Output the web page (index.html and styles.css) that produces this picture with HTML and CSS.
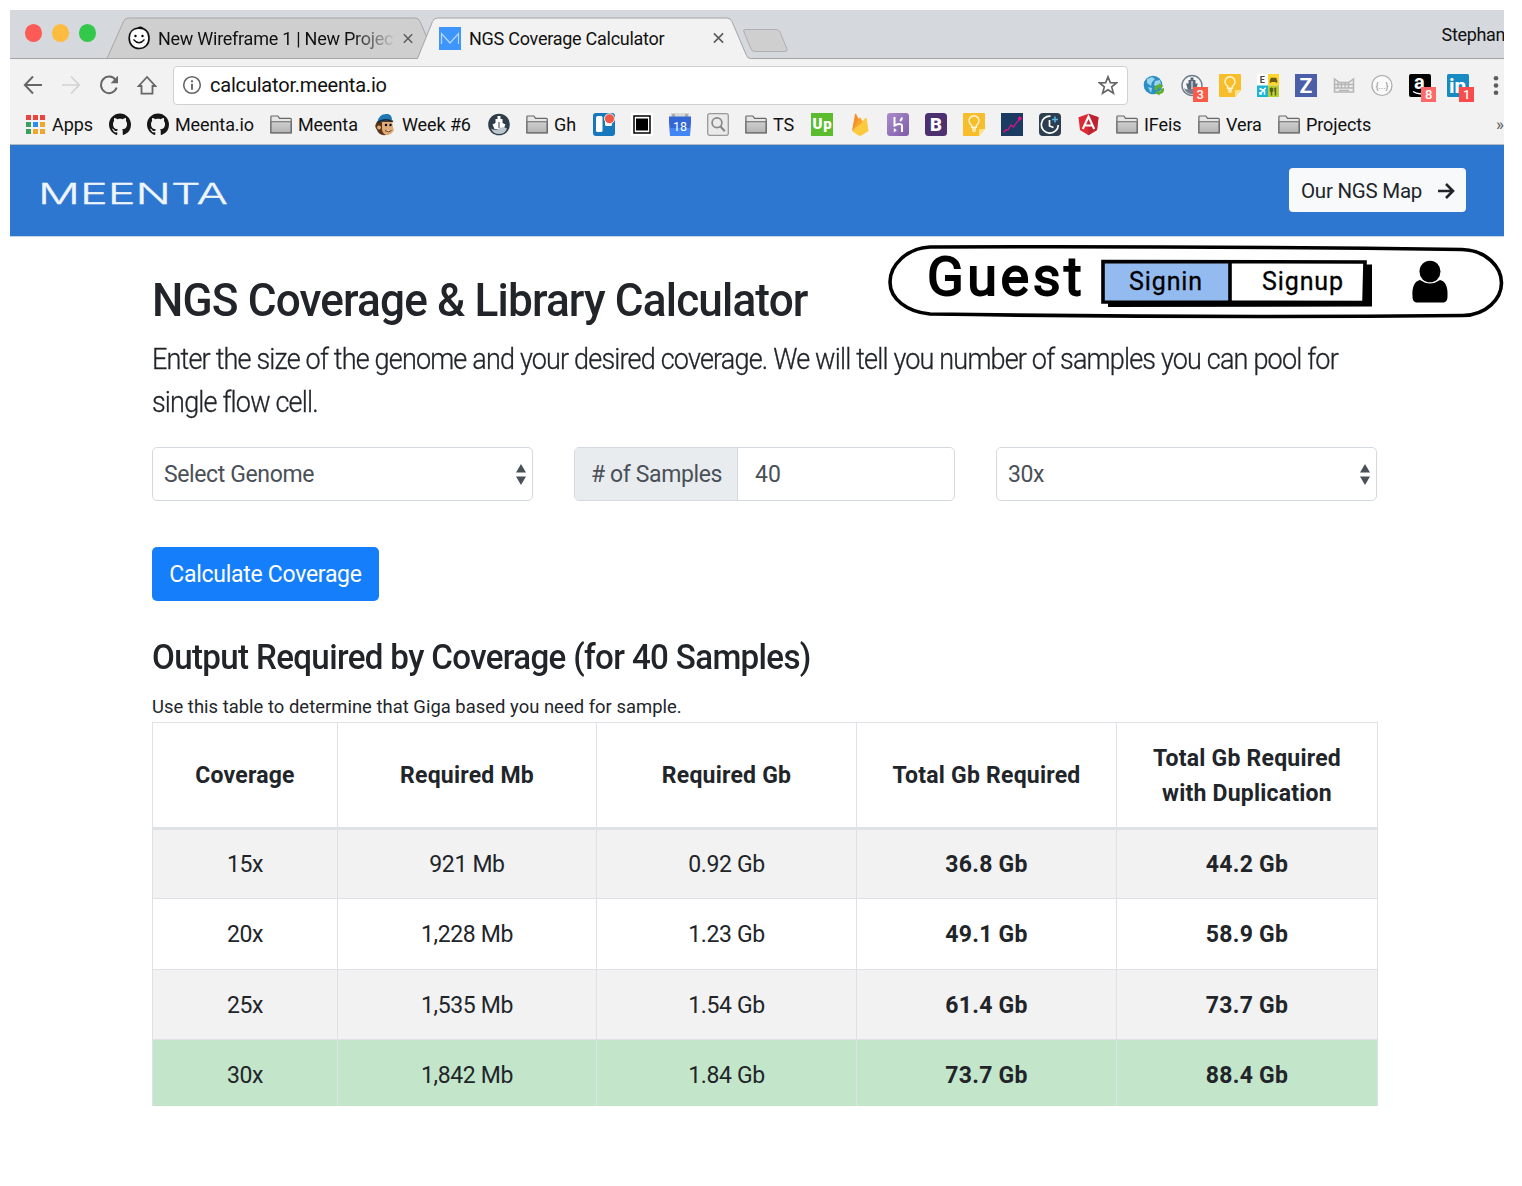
FILE: index.html
```html
<!DOCTYPE html>
<html lang="en">
<head>
<meta charset="utf-8">
<title>NGS Coverage Calculator</title>
<link rel="stylesheet" href="styles.css">
</head>
<body>
<svg class="defs" width="0" height="0">
  <defs>
    <linearGradient id="folderFill" x1="0" y1="0" x2="0" y2="1"><stop offset="0" stop-color="#cfcfcf"/><stop offset="1" stop-color="#b4b4b4"/></linearGradient>
    <linearGradient id="herokuFill" x1="0" y1="0" x2="1" y2="1"><stop offset="0" stop-color="#a88bcb"/><stop offset="1" stop-color="#7f5da8"/></linearGradient>
    <symbol id="folder" viewBox="0 0 22 22"><path d="M.9 19.3V3.3q0-.8.8-.8h6.2l1.6 2.3h10.9q.9 0 .9.9v13.6z" fill="#e6e6e6" stroke="#686868" stroke-width="1.2"/><path d="M1 8.2h20v11H1z" fill="url(#folderFill)" stroke="#686868" stroke-width="1.1"/></symbol>
    <symbol id="github" viewBox="0 0 16 16"><path fill="#161616" d="M8 0C3.58 0 0 3.58 0 8c0 3.54 2.29 6.53 5.47 7.59.4.07.55-.17.55-.38 0-.19-.01-.82-.01-1.49-2.01.37-2.53-.49-2.69-.94-.09-.23-.48-.94-.82-1.13-.28-.15-.68-.52-.01-.53.63-.01 1.08.58 1.23.82.72 1.21 1.87.87 2.33.66.07-.52.28-.87.51-1.07-1.78-.2-3.64-.89-3.64-3.95 0-.87.31-1.59.82-2.15-.08-.2-.36-1.02.08-2.12 0 0 .67-.21 2.2.82.64-.18 1.32-.27 2-.27s1.36.09 2 .27c1.53-1.04 2.2-.82 2.2-.82.44 1.1.16 1.92.08 2.12.51.56.82 1.27.82 2.15 0 3.07-1.87 3.75-3.65 3.95.29.25.54.73.54 1.48 0 1.07-.01 1.93-.01 2.2 0 .21.15.46.55.38A8.01 8.01 0 0 0 16 8c0-4.42-3.58-8-8-8z"/></symbol>
    <symbol id="keep" viewBox="0 0 22 23"><path d="M1 0h20a1 1 0 0 1 1 1v15l-6 7H1a1 1 0 0 1-1-1V1a1 1 0 0 1 1-1z" fill="#f7bd2b"/><path d="M22 16l-6 7v-6a1 1 0 0 1 1-1z" fill="#fde18c"/><path d="M8.600 14.200v-2.100a5 5 0 1 1 4.800 0v2.100z M9 16h4M9.400 18h3.200" fill="none" stroke="#fff6d5" stroke-width="1.400"/></symbol>
    <symbol id="close" viewBox="0 0 10 10"><path d="M.8.8l8.400 8.400M9.200.8L.8 9.200" stroke="#5c5c5c" stroke-width="1.500"/></symbol>
  </defs>
</svg>

<div class="window">
  <div class="tabstrip">
    <svg class="tab-shapes" width="1494" height="49" viewBox="10 10 1494 49">
      <path d="M107 58.500l16.500-37q1.500-3.500 5-3.500H415q3.500 0 5 3.500L428 40l-8 18.500z" fill="#cfcfcf" stroke="#a6a6a8"/>
      <path d="M10 58.500H417.500L432.500 21.500q1.500-3.500 5-3.500H727q3.500 0 5 3.500l14.500 34q1 3 4 3V60H10z" fill="#f2f2f2"/>
      <path d="M10 58.500H417.500L432.500 21.500q1.500-3.500 5-3.500H727q3.500 0 5 3.500l14.500 34q1 3 4 3H1504" fill="none" stroke="#a2a4a7"/>
      <path d="M745 29.500h31q3 0 4 2.500l7 17q.7 2.500-2 2.500h-30q-3 0-4-2.500l-7-17q-1-2.500 1-2.500z" fill="#cfcfcf" stroke="#adafb2"/>
    </svg>
    <div class="lights"><i class="red"></i><i class="amber"></i><i class="green"></i></div>
    <div class="tab tab-first">
      <svg width="22" height="24" viewBox="0 0 22 24"><path d="M10 2.200C5 2.500 1.200 6 1.200 12c0 6.500 4 10.500 9.800 10.500s10-4 10-10C21 6 17.500 1.800 10 2.200zM10 2.200q2-1.500 5 0" fill="#fff" stroke="#111" stroke-width="1.700"/><circle cx="7.500" cy="10" r="1.200"/><circle cx="14.500" cy="10" r="1.200"/><path d="M5.500 13.500q5.500 6.500 11 0" fill="none" stroke="#111" stroke-width="1.300"/></svg>
      <span class="tab-title fade">New Wireframe 1 | New Project</span>
      <svg class="x" width="10" height="11"><use href="#close"/></svg>
    </div>
    <div class="tab tab-active">
      <svg width="22" height="23" viewBox="0 0 22 23"><path d="M0 0h22v23H0z" fill="#3e95fb"/><path d="M2.500 17V6.500L11 16l8.500-9.500V17" fill="none" stroke="#b9dafd" stroke-width="1.200"/></svg>
      <span class="tab-title">NGS Coverage Calculator</span>
      <svg class="x" width="11" height="12"><use href="#close"/></svg>
    </div>
    <span class="profile">Stephan</span>
  </div>

  <div class="toolbar">
    <div class="nav-icons">
      <svg width="20" height="20" viewBox="0 0 20 20"><path d="M19 10H2M10 1.500L1.800 10l8.200 8.500" fill="none" stroke="#666" stroke-width="1.900"/></svg>
      <svg width="20" height="20" viewBox="0 0 20 20"><path d="M1 10h17M10 1.500l8.200 8.500-8.200 8.500" fill="none" stroke="#d2d2d2" stroke-width="1.700"/></svg>
      <svg width="20" height="20" viewBox="0 0 20 20"><path d="M16.500 5A8 8.300 0 1 0 17.600 12.500" fill="none" stroke="#666" stroke-width="2"/><path d="M19 .8v7.400h-7.400z" fill="#666"/></svg>
      <svg width="20" height="20" viewBox="0 0 20 20"><path d="M1.700 11L10 2l8.300 9H15.500v7.600h-11V11z" fill="none" stroke="#666" stroke-width="1.800"/></svg>
    </div>
    <div class="omnibox">
      <svg width="20" height="20" viewBox="0 0 20 20"><circle cx="10" cy="10" r="8.300" fill="none" stroke="#666" stroke-width="1.600"/><path d="M10 8.800v6M10 5.300v2" stroke="#666" stroke-width="1.900"/></svg>
      <span class="url">calculator.meenta.io</span>
      <svg width="20" height="20" viewBox="0 0 20 20"><path d="M10 1.800l2.300 5.800 6.200.3-4.800 4 1.700 6.300L10 14.700l-5.400 3.500 1.700-6.300-4.800-4 6.200-.3z" fill="none" stroke="#666" stroke-width="1.700"/></svg>
    </div>
    <div class="extensions">
      <svg width="22" height="23" viewBox="0 0 22 23"><circle cx="10" cy="11" r="9.300" fill="#2b8fc6"/><path d="M4 5l5-2 3 2-3 3-1 4-4-3zM12 7l5-1 1 4-4 3-3-2zM5 13l4 1-1 5z" fill="#9cd4ee"/><path d="M11.500 16q-1-5 4.500-5.500l-.5-1.500 5 3-4 3-.3-2q-2 .3-1.500 3zM21 14q1 5.500-4.500 6l.3 1.500-5-2.500 4-3 .3 2q2-.5 1.700-3z" fill="#5fae2c"/></svg>
      <div class="ext"><svg width="22" height="23" viewBox="0 0 22 23"><circle cx="11" cy="11.500" r="10" fill="#f4f6f8" stroke="#707b88" stroke-width="1.400"/><path d="M9.500 3.500h3V6h2v3.500h2.300L15 16H7L5 9.500h2.500V6h2z" fill="#596879"/><path d="M3 14q4 3 8 0t8 0q-2 6-8 6t-8-6z" fill="#718191"/><path d="M11 7v8" stroke="#fff"/></svg><b class="badge coral">3</b></div>
      <svg width="22" height="23"><use href="#keep"/></svg>
      <svg width="22" height="23" viewBox="0 0 22 23"><path d="M0 0h11v11.500H0z" fill="#fff"/><path d="M11 0h11v11.500H11z" fill="#ffd52e"/><path d="M0 11.500h11V23H0z" fill="#1ab4d7"/><path d="M11 11.500h11V23H11z" fill="#b8cf36"/><text x="2.800" y="9" font-size="9" font-weight="700" fill="#444">E</text><path d="M12.800 8.800V6.500l1-2.700h5.400l1 2.700v2.300h-1.500V8h-4.400v.8z" fill="#6d5b13"/><path d="M2.500 20.500L8.700 13.800M2.500 14.500l5 2.300v4M2 18.500l2.800 2" stroke="#fff" stroke-width="1.500" fill="none"/><path d="M14.500 13.500v8M18.500 13.500v8M13.500 14v3h2v-3M18 14v3.500" stroke="#555f19" stroke-width="1.400" fill="none"/></svg>
      <svg width="22" height="23" viewBox="0 0 22 23"><path d="M0 0h22v23H0z" fill="#4b5fa8"/><text x="4.500" y="19" font-size="21" font-weight="700" fill="#fff">Z</text></svg>
      <svg width="22" height="23" viewBox="0 0 22 23"><path d="M1.500 5v13h19V5l-5 3.500h-9z" fill="#ececec" stroke="#b5b5b5" stroke-width="1.500"/><path d="M2 10.500h18M2 14h18M5 7v7M8.500 8.500V14M12 8.500V14M15.500 8v6M6 16.300h10" stroke="#b5b5b5" stroke-width="1.300"/></svg>
      <svg width="22" height="23" viewBox="0 0 22 23"><circle cx="11" cy="11.500" r="10" fill="#fafafa" stroke="#aaa" stroke-width="1.200"/><text x="11" y="14.500" font-size="9" text-anchor="middle" fill="#888">{...}</text></svg>
      <div class="ext"><svg width="22" height="23" viewBox="0 0 22 23"><rect width="22" height="23" rx="2"/><text x="5" y="15" font-size="20" font-weight="700" fill="#fff">a</text><path d="M4 17.500q6 4 12 1" stroke="#fff" stroke-width="1.500" fill="none"/></svg><b class="badge pink">8</b></div>
      <div class="ext"><svg width="22" height="23" viewBox="0 0 22 23"><rect width="22" height="23" rx="1.500" fill="#178bc2"/><text x="2" y="18.500" font-size="21" font-weight="700" fill="#fff">in</text></svg><b class="badge">1</b></div>
      <svg width="22" height="23" viewBox="0 0 22 23"><g fill="#5c5c5c"><circle cx="11" cy="4.200" r="2.300"/><circle cx="11" cy="11.500" r="2.300"/><circle cx="11" cy="18.800" r="2.300"/></g></svg>
    </div>
  </div>

  <div class="bookmarks">
    <div class="bm"><svg width="22" height="23" viewBox="0 0 22 23"><path d="M2 2h5v5H2zM9 2h5v5H9zM16 2h5v5h-5z" fill="#ea4540"/><path d="M2 9h5v5H2z" fill="#3aa05c"/><path d="M9 9h5v5H9z" fill="#2a8bf0"/><path d="M16 9h5v5h-5z" fill="#f0a52c"/><path d="M2 16h5v5H2z" fill="#3aa05c"/><path d="M9 16h5v5H9zM16 16h5v5h-5z" fill="#f0a52c"/></svg><span>Apps</span></div>
    <div class="bm"><svg width="22" height="23"><use href="#github"/></svg></div>
    <div class="bm"><svg width="22" height="23"><use href="#github"/></svg><span>Meenta.io</span></div>
    <div class="bm"><svg width="22" height="23"><use href="#folder"/></svg><span>Meenta</span></div>
    <div class="bm"><svg width="22" height="23" viewBox="0 0 22 23"><path d="M4 8Q-1 12 3 17q2 6 9 5 6-1 6-8V8z" fill="#5b3419"/><path d="M8 9h10l1 5 1 3q-2 5-8 5-3-1-4-5z" fill="#dfab78"/><path d="M3.500 9Q5 0 14 1q4 1 4 6z" fill="#1f78b4"/><path d="M3.500 9.500Q10 5 19 8.500" stroke="#152a3a" stroke-width="1.800" fill="none"/><circle cx="12" cy="12" r="1.200"/><circle cx="16.500" cy="12" r="1.200"/><path d="M11 17.500q4 2.500 6.500 0" fill="#fff" stroke="#5b2e14" stroke-width="1"/><circle cx="5" cy="14.500" r="2" fill="#dfab78"/></svg><span>Week #6</span></div>
    <div class="bm"><svg width="22" height="23" viewBox="0 0 22 23"><circle cx="11" cy="11.500" r="10.800" fill="#2f3d4a"/><path d="M9.500 3h3v3h2v4l3 1.500-2 4.500H6.500l-2-4.500 3-1.500V6h2z" fill="#fff"/><path d="M3 15.500q4 2.500 8 0t8 0q-2 5.500-8 5.500t-8-5.500z" fill="#bcc6cd"/><path d="M11 9v6" stroke="#2f3d4a"/></svg></div>
    <div class="bm"><svg width="22" height="23"><use href="#folder"/></svg><span>Gh</span></div>
    <div class="bm"><svg width="22" height="23" viewBox="0 0 22 23"><rect y="0" width="22" height="23" rx="3" fill="#1778bd"/><rect x="3" y="3" width="6.500" height="16" rx="1.500" fill="#fff"/><rect x="12" y="4" width="7" height="9" rx="1.500" fill="#fff"/><circle cx="16.500" cy="5.700" r="5" fill="#ee5a45" stroke="#f2f2f2"/></svg></div>
    <div class="bm"><svg width="22" height="23" viewBox="0 0 22 23"><path d="M0 0h22v23H0z" fill="#fff"/><path d="M3 3h16v17H3z" fill="none" stroke="#000" stroke-width="1.500"/><path d="M5 5.500h12v12H5z"/></svg></div>
    <div class="bm"><svg width="22" height="23" viewBox="0 0 22 23"><path d="M1.500 0h19v6h-19z" fill="#d9d9d9"/><path d="M3 1h3v3H3zM16 1h3v3h-3z" fill="#aaa"/><path d="M0 3.500h22V9l-1 14H1L0 9z" fill="#3367d6"/><path d="M1 15h20v8H1z" fill="#4285f4"/><text x="11" y="18" font-size="12.500" text-anchor="middle" fill="#fff">18</text></svg></div>
    <div class="bm"><svg width="22" height="23" viewBox="0 0 22 23"><rect x=".7" y=".7" width="20.600" height="21.600" rx="2" fill="#eaeaea" stroke="#999" stroke-width="1.300"/><circle cx="10" cy="9.800" r="4.900" fill="none" stroke="#888" stroke-width="1.700"/><path d="M13.300 13.300l4.500 5" stroke="#888" stroke-width="2.200"/></svg></div>
    <div class="bm"><svg width="22" height="23"><use href="#folder"/></svg><span>TS</span></div>
    <div class="bm"><svg width="22" height="23" viewBox="0 0 22 23"><path d="M0 0h22v23H0z" fill="#5bbc2f"/><text x="1.500" y="15.500" font-size="15" font-weight="900" textLength="19" fill="#fff">Up</text></svg></div>
    <div class="bm"><svg width="22" height="23" viewBox="0 0 22 23"><path d="M3 18L6 1q.5-1 1 0l4 7z" fill="#f6902b"/><path d="M3 18L16.500 5q1-.7 1.200.5L19.500 18l-7 4.500q-1.500.7-3 0z" fill="#fcca3f"/><path d="M3 18l7.500-13q.7-1 1.300 0L13.700 9z" fill="#f8a52d"/></svg></div>
    <div class="bm"><svg width="22" height="23" viewBox="0 0 22 23"><rect width="22" height="23" rx="3" fill="url(#herokuFill)"/><path d="M7.500 4v8.500q7.500-3 7.500.5v6M15 4.500q-.3 2-2 3.500" fill="none" stroke="#fff" stroke-width="2"/><path d="M6.800 15l3 2.200-3 2.300z" fill="#fff"/></svg></div>
    <div class="bm"><svg width="22" height="23" viewBox="0 0 22 23"><rect width="22" height="23" rx="3.500" fill="#4c3070"/><text x="11" y="18" font-size="18.500" font-weight="900" text-anchor="middle" fill="#fff">B</text></svg></div>
    <div class="bm"><svg width="22" height="23"><use href="#keep"/></svg></div>
    <div class="bm"><svg width="22" height="23" viewBox="0 0 22 23"><path d="M0 0h22v23H0z" fill="#1c3b62"/><path d="M2.500 19.500l2.500-3 2 .5 3-5 2.500 2L16 9l1.500-1L19 5" fill="none" stroke="#d11683" stroke-width="1.300"/><circle cx="18.700" cy="5.500" r="1.900" fill="#e0148a"/></svg></div>
    <div class="bm"><svg width="22" height="23" viewBox="0 0 22 23"><rect width="22" height="23" rx="4" fill="#2c3e50"/><path d="M11.500 3.200A8.500 8.500 0 1 0 19.300 12" fill="none" stroke="#fff" stroke-width="1.700"/><path d="M10.500 7v6l4 1.500" fill="none" stroke="#fff" stroke-width="1.700"/><path d="M16 3.500v6M13 6.500h6" stroke="#55b8e8" stroke-width="1.500"/></svg></div>
    <div class="bm"><svg width="22" height="23" viewBox="0 0 22 23"><path d="M11.500.8l10 3.500L20 17l-8.500 5.200L3 17 1.500 4.300z" fill="#dd2a35"/><path d="M11.500.8l10 3.500L20 17l-8.500 5.200z" fill="#bd2331"/><path d="M5.800 16l5.700-12.500L17.200 16M8.300 12.500h6.400" fill="none" stroke="#fff" stroke-width="2.100"/></svg></div>
    <div class="bm"><svg width="22" height="23"><use href="#folder"/></svg><span>IFeis</span></div>
    <div class="bm"><svg width="22" height="23"><use href="#folder"/></svg><span>Vera</span></div>
    <div class="bm"><svg width="22" height="23"><use href="#folder"/></svg><span>Projects</span></div>
    <div class="more">»</div>
  </div>

  <header class="navbar">
    <svg class="logo" width="190" height="26" viewBox="0 0 190 26"><text x="-3" y="22" textLength="190" lengthAdjust="spacingAndGlyphs">MEENTA</text></svg>
    <a class="map-btn"><span>Our NGS Map</span><svg width="18" height="18" viewBox="0 0 18 18"><path d="M1 9h14M9 2l7 7-7 7" fill="none" stroke="#212529" stroke-width="2.600"/></svg></a>
  </header>

  <main class="content">
    <h1>NGS Coverage &amp; Library Calculator</h1>
    <p class="lead">Enter the size of the genome and your desired coverage. We will tell you number of samples you can pool for<br>single flow cell.</p>
    <div class="controls">
      <div class="select"><span>Select Genome</span><svg width="10" height="21" viewBox="0 0 10 21"><path d="M0 8.500L5 0l5 8.500zM0 12.500h10L5 21z" fill="#495057"/></svg></div>
      <div class="group"><span class="addon">#&nbsp;of Samples</span><span class="value">40</span></div>
      <div class="select"><span>30x</span><svg width="10" height="21" viewBox="0 0 10 21"><path d="M0 8.500L5 0l5 8.500zM0 12.500h10L5 21z" fill="#495057"/></svg></div>
    </div>
    <a class="calc-btn">Calculate Coverage</a>
    <h2>Output Required by Coverage (for 40 Samples)</h2>
    <small class="hint">Use this table to determine that Giga based you need for sample.</small>
    <table>
      <colgroup><col class="c1"><col class="c2"><col class="c3"><col class="c4"><col class="c5"></colgroup>
      <thead><tr><th>Coverage</th><th>Required Mb</th><th>Required Gb</th><th>Total Gb Required</th><th>Total Gb Required<br>with Duplication</th></tr></thead>
      <tbody>
        <tr><td>15x</td><td>921 Mb</td><td>0.92 Gb</td><td>36.8 Gb</td><td>44.2 Gb</td></tr>
        <tr><td>20x</td><td>1,228 Mb</td><td>1.23 Gb</td><td>49.1 Gb</td><td>58.9 Gb</td></tr>
        <tr><td>25x</td><td>1,535 Mb</td><td>1.54 Gb</td><td>61.4 Gb</td><td>73.7 Gb</td></tr>
        <tr class="success"><td>30x</td><td>1,842 Mb</td><td>1.84 Gb</td><td>73.7 Gb</td><td>88.4 Gb</td></tr>
      </tbody>
    </table>
  </main>
</div>

<div class="account">
  <svg class="outline" width="620" height="76" viewBox="886 244 620 76">
    <path d="M930 247Q1200 246 1462 249.500C1486 250 1501.500 267 1501.500 283S1486 315 1463 315.500Q1200 318 930 314C907 312 890 299 890 282S907 248 930 247z" fill="#fff" stroke="#000" stroke-width="3.600"/>
    <path d="M1108 307l264-.5v-42h-7v37H1108z"/>
    <path d="M1103 261.500l262 .5-1 40-261-.5z" fill="#fff"/>
    <path d="M1103 261.500h127v41h-127z" fill="#94bbef"/>
    <path d="M1103 261.500l262 .5-1 40.500-261-.5zM1230 262v41" fill="none" stroke="#000" stroke-width="3.600"/>
    <ellipse cx="1430" cy="271.500" rx="10.500" ry="10.800"/>
    <path d="M1420 280q10 7 20 0c6 1 8 8 7.500 16 0 4-1 6.500-5 6.500h-25c-4 0-5-2.500-5-6.500-.5-8 1.500-15 7.500-16z"/>
  </svg>
  <span class="guest">Guest</span>
  <span class="signin">Signin</span>
  <span class="signup">Signup</span>
</div>
</body>
</html>
```

FILE: styles.css
```css
* { box-sizing: border-box; }
body {
  margin: 0;
  width: 1522px;
  height: 1186px;
  overflow: hidden;
  background: #fff;
  color: #212529;
  font-family: Roboto, "Liberation Sans", sans-serif;
}
svg { display: block; flex: none; }
.defs { position: absolute; }
.window { margin: 10px 0 0 10px; width: 1494px; height: 1096px; overflow: hidden; }

/* Browser chrome */
.tabstrip {
  position: relative;
  display: flex;
  height: 49px;
  background: #d5d8dd;
  color: #111;
}
.tab-shapes { position: absolute; left: 0; top: 0; }
.lights { position: relative; display: flex; gap: 10px; padding: 14px 0 0 14.500px; width: 118px; }
.lights i { width: 17.300px; height: 18px; border-radius: 50%; }
.red { background: #fc5b57; }
.amber { background: #fdbc40; }
.green { background: #34c84a; }
.tab { position: relative; display: flex; align-items: center; height: 40px; margin-top: 8px; font-size: 18px; letter-spacing: -.26px; }
.tab-first { width: 310px; }
.tab-active { width: 300px; }
.tab-active svg:first-child { margin-left: 1px; }
.tab-title { margin-left: 8px; white-space: nowrap; flex: 1; overflow: hidden; }
.tab-first .tab-title { flex: 0 0 236px; }
.tab-first .x { margin-left: 9px; }
.tab-active .x { margin-right: 14px; }
.fade { -webkit-mask-image: linear-gradient(90deg, #000 82%, transparent 101%); mask-image: linear-gradient(90deg, #000 82%, transparent 101%); }
.profile { position: relative; margin-left: auto; margin-right: -1px; font-size: 18px; line-height: 49px; letter-spacing: -.35px; }

.toolbar { display: flex; align-items: center; height: 52px; background: #f2f2f2; }
.nav-icons { display: flex; gap: 18px; width: 163px; padding-left: 13px; }
.omnibox {
  display: flex;
  align-items: center;
  width: 955px;
  flex: none;
  height: 39px;
  padding: 0 9px 0 8px;
  border: 1px solid #d0d0d0;
  border-radius: 4px;
  background: #fff;
}
.nav-icons { flex: none; }
.url { flex: 1; margin-left: 8px; font-size: 20px; color: #111; letter-spacing: -.2px; }
.extensions { display: flex; flex: none; gap: 16.100px; margin: 0 -10px 0 14.500px; }
.ext { position: relative; }
.badge {
  position: absolute;
  left: 12px;
  top: 13px;
  width: 15px;
  height: 15px;
  background: #fb4b4b;
  color: #fff;
  font-size: 13px;
  font-weight: 500;
  line-height: 15px;
  text-align: center;
}
.coral { background: #ff5a47; }
.pink { background: #fc6a6a; }

.bookmarks {
  display: grid;
  grid-template-columns: 85px 38px 123px 104px 114px 38px 67px 38px 38px 38px 38px 66px 38px 38px 38px 38px 38px 38px 38px 39px 82px 80px 218px 10px;
  align-items: center;
  height: 34px;
  padding: 0 0 7px 14px;
  border-bottom: 1px solid #b5b9c0;
  background: #f2f2f2;
  color: #111;
  font-size: 18px;
  letter-spacing: -.1px;
}
.bm { display: flex; align-items: center; gap: 6px; white-space: nowrap; }
.more { color: #555; font-size: 17px; }

/* Page */
.navbar {
  display: flex;
  justify-content: space-between;
  align-items: flex-start;
  height: 92px;
  padding: 23px 38px 0 31px;
  background: #2e77d0;
  border-bottom: 1px solid #c3d3e8;
}
.logo { margin-top: 14px; overflow: visible; }
.logo text { font-family: Inter, sans-serif; font-weight: 300; font-size: 28px; fill: #eef5fd; stroke: #eef5fd; stroke-width: .3px; }
.map-btn {
  display: flex;
  align-items: center;
  justify-content: space-between;
  width: 177px;
  height: 44px;
  padding: 2px 11px 0 12px;
  border-radius: 4px;
  background: #f8f9fa;
  font-size: 20.500px;
  letter-spacing: -.25px;
}
.content { width: 1225px; margin-left: 142px; font-size: 23px; }
h1, h2, .lead { white-space: nowrap; transform-origin: 0 0; }
h1 { margin: 35px 0 10px; font-size: 46px; font-weight: 500; line-height: 56px; letter-spacing: -.9px; transform: scaleX(.96); }
.lead { margin: 0; font-size: 28.750px; font-weight: 300; line-height: 43px; letter-spacing: -.88px; transform: scaleX(.94); -webkit-text-stroke: .3px currentColor; }
.controls { display: grid; grid-template-columns: repeat(3, 381px); justify-content: space-between; margin-top: 22.500px; color: #495057; letter-spacing: -.38px; }
.select {
  display: flex;
  align-items: center;
  justify-content: space-between;
  height: 54px;
  padding: 1px 6px 0 11px;
  border: 1.500px solid #d3d9de;
  border-radius: 5px;
}
.group { display: flex; height: 54px; border: 1px solid #d3d9de; border-radius: 5px; overflow: hidden; line-height: 54px; }
.addon { width: 163px; padding-left: 16px; background: #e9ecef; border-right: 1px solid #d3d9de; white-space: nowrap; }
.value { padding-left: 17px; letter-spacing: 0; }
.calc-btn {
  display: block;
  width: 227px;
  height: 54px;
  margin-top: 46.500px;
  border-radius: 5px;
  background: #157efb;
  color: #fff;
  line-height: 56px;
  text-align: center;
  letter-spacing: -.28px;
}
h2 { margin: 36px 0 15px; font-size: 34.500px; font-weight: 500; line-height: 41px; letter-spacing: -.68px; transform: scaleX(.96); }
.hint { display: block; height: 29px; font-size: 18.400px; line-height: 27.600px; letter-spacing: .03px; }
table { width: 1226px; table-layout: fixed; border-collapse: collapse; text-align: center; }
.c1 { width: 185px; }
.c2 { width: 259px; }
.c3, .c4 { width: 260px; }
.c5 { width: 261px; }
th, td { padding: 3px 0 0; border: 1px solid #dee2e6; line-height: 34.500px; }
th { height: 106px; border-bottom-width: 3px; font-weight: 700; letter-spacing: .22px; }
td { height: 70.400px; letter-spacing: -.35px; }
td:nth-child(n+4) { font-weight: 700; letter-spacing: .25px; }
tbody tr:nth-child(odd) { background: #f2f2f2; }
tbody .success { background: #c3e6cb; }

/* Sketched account box lying over the page */
.account { position: absolute; left: 886px; top: 244px; width: 620px; height: 76px; color: #000; }
.account span { position: absolute; white-space: nowrap; line-height: 1; -webkit-text-stroke: .3px #000; }
.account .guest { left: 41px; top: 6px; font-size: 54px; font-weight: 400; letter-spacing: 3.500px; -webkit-text-stroke: 1.800px #000; }
.signin { left: 243px; top: 25px; font-size: 25px; letter-spacing: .9px; }
.signup { left: 376px; top: 25px; font-size: 25px; letter-spacing: .9px; }
```
